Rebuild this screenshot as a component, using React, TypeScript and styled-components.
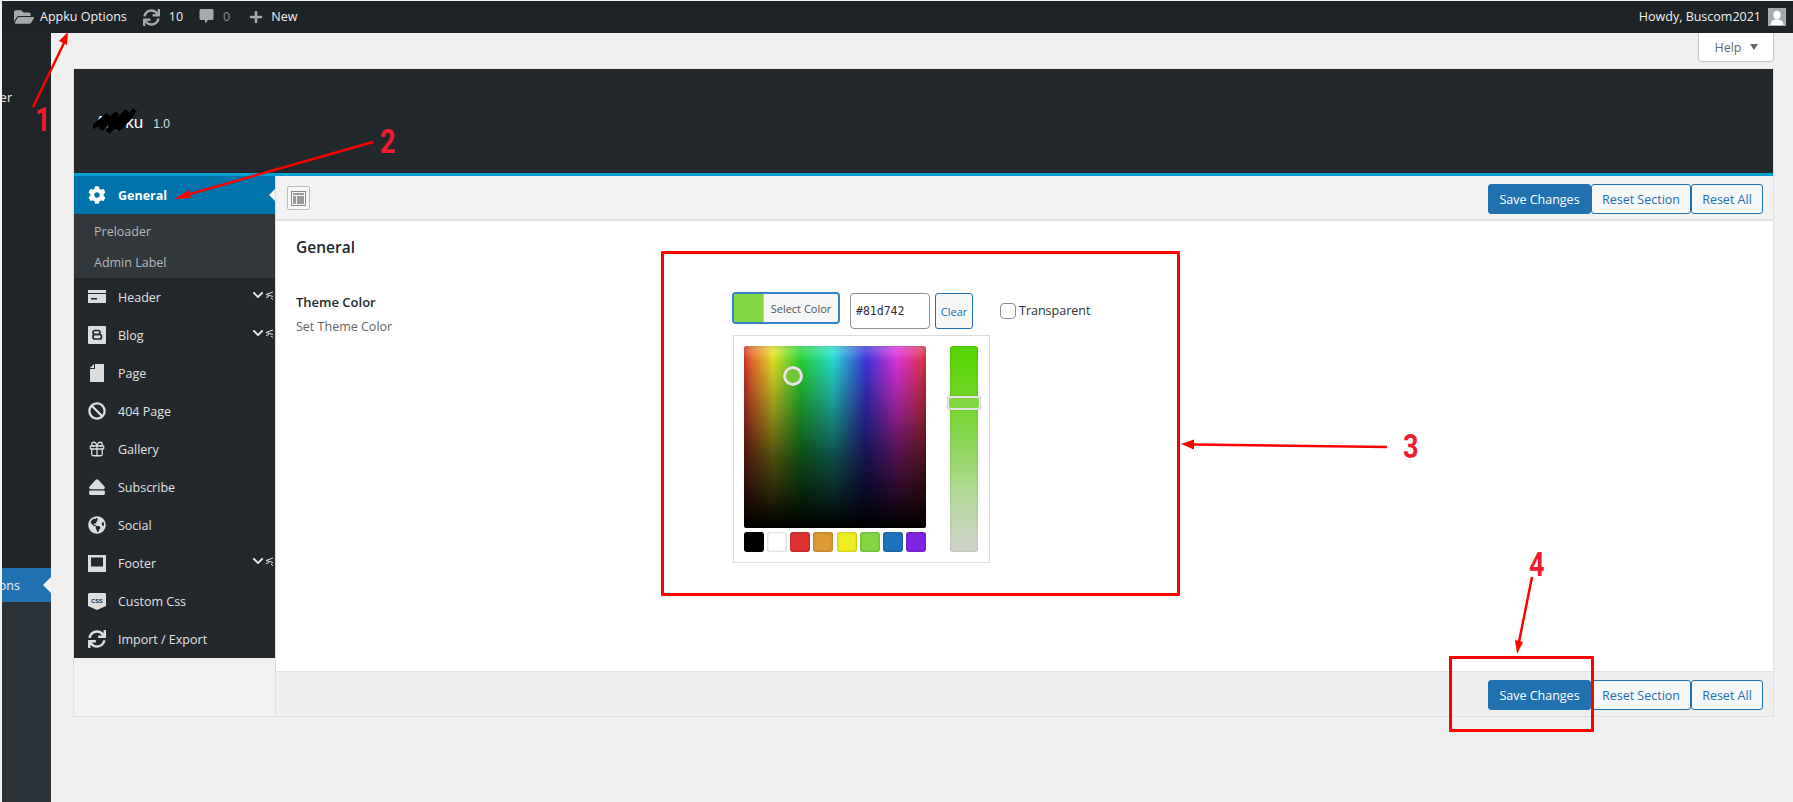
import React from "react";
import styled, { createGlobalStyle } from "styled-components";
import { FaCog, FaBan, FaEject, FaGlobeAmericas, FaSync, FaFolderOpen, FaPlus, FaChevronDown } from "react-icons/fa";
import { Gift } from "lucide-react";

const GlobalStyle = createGlobalStyle`
  html, body {
    margin: 0;
    padding: 0;
    background: #f0f0f1;
    font-family: "Open Sans", "Noto Sans", sans-serif;
    font-size: 12.5px;
    color: #3c434a;
  }
  * { box-sizing: border-box; }
`;

const Page = styled.div`
  position: relative;
  width: 1793px;
  height: 802px;
  padding: 1px 0 0 2px;
  background: #f4f4f4;
  overflow: hidden;
  display: flex;
  flex-direction: column;
`;

const AdminBar = styled.div`
  height: 32px;
  background: #1d2327;
  color: #f0f0f1;
  display: flex;
  align-items: center;
  padding: 0 7px 0 12px;
  flex-shrink: 0;
`;

const BarItem = styled.div<{ $gap?: number; $mr?: number }>`
  display: flex;
  align-items: center;
  gap: ${(p) => p.$gap ?? 7}px;
  margin-right: ${(p) => p.$mr ?? 16}px;
  line-height: 32px;
  color: #f0f0f1;
  svg { color: #a7aaad; display: block; }
`;

const MutedCount = styled.span`
  color: #8c8f94;
`;

const BarSpacer = styled.div`
  flex: 1;
`;

const Avatar = styled.div`
  width: 18px;
  height: 18px;
  background: #a7aaad;
  margin-left: 7px;
  svg { display: block; }
`;

const Layout = styled.div`
  flex: 1;
  display: flex;
  min-height: 0;
`;

const WpMenu = styled.div`
  width: 49px;
  flex-shrink: 0;
  background: #1e2427;
  display: flex;
  flex-direction: column;
  padding-top: 47px;
`;

const WpMenuItem = styled.div<{ $active?: boolean; $right: number; $height: number; $mt?: number }>`
  position: relative;
  height: ${(p) => p.$height}px;
  margin-top: ${(p) => p.$mt ?? 0}px;
  display: flex;
  align-items: center;
  justify-content: flex-end;
  padding-right: ${(p) => p.$right}px;
  white-space: nowrap;
  color: #f0f0f1;
  background: ${(p) => (p.$active ? "#2271b1" : "transparent")};
  ${(p) =>
    p.$active &&
    `&::after {
      content: "";
      position: absolute;
      right: 0;
      top: 9px;
      border: 8px solid transparent;
      border-right-color: #f0f0f1;
      border-left-width: 0;
    }`}
`;

const WpMenuRest = styled.div`
  flex: 1;
  background: #2c3338;
`;

const Main = styled.div`
  flex: 1;
  min-width: 0;
  display: flex;
  flex-direction: column;
  background: #f0f0f1;
`;

const HelpRow = styled.div`
  height: 29px;
  display: flex;
  justify-content: flex-end;
  padding-right: 19px;
`;

const HelpTab = styled.div`
  width: 76px;
  height: 29px;
  background: #fff;
  border: 1px solid #c3c4c7;
  border-top: none;
  border-radius: 0 0 4px 4px;
  color: #646970;
  display: flex;
  align-items: center;
  justify-content: center;
  gap: 8px;
`;

const HelpCaret = styled.span`
  width: 0;
  height: 0;
  border-left: 4px solid transparent;
  border-right: 4px solid transparent;
  border-top: 6px solid #646970;
`;

const Panel = styled.div`
  margin: 6px 19px 0 22px;
  height: 649px;
  display: flex;
  flex-direction: column;
  border: 1px solid #e0e0e0;
  border-top-color: #e5e5e5;
  background: #f1f1f1;
`;

const PanelHeader = styled.div`
  height: 107px;
  flex-shrink: 0;
  background: #23282d;
  border-bottom: 3px solid #00a0d2;
  display: flex;
  align-items: center;
  padding: 3px 0 0 21px;
  gap: 10px;
`;

const Brand = styled.div`
  position: relative;
  font-family: "Liberation Sans", Arial, sans-serif;
  font-size: 17px;
  color: #fff;
  line-height: 20px;
`;

const Scribble = styled.svg`
  position: absolute;
  left: -2px;
  top: -7px;
`;

const Version = styled.span`
  font-family: "Liberation Sans", Arial, sans-serif;
  font-size: 12px;
  color: #d8e2ea;
  padding-top: 2px;
`;

const PanelBody = styled.div`
  flex: 1;
  display: flex;
  min-height: 0;
`;

const Sidebar = styled.div`
  width: 202px;
  flex-shrink: 0;
  display: flex;
  flex-direction: column;
  background: #f1f1f1;
  border-right: 1px solid #dcdcdc;
`;

const NavItem = styled.div<{ $active?: boolean }>`
  position: relative;
  height: 38px;
  flex-shrink: 0;
  display: flex;
  align-items: center;
  gap: 12px;
  padding-left: 14px;
  background: ${(p) => (p.$active ? "#0073aa" : "#23282d")};
  color: ${(p) => (p.$active ? "#fff" : "#e2e2e2")};
  font-weight: ${(p) => (p.$active ? 700 : 400)};
  ${(p) =>
    p.$active &&
    `&::after {
      content: "";
      position: absolute;
      right: 0;
      top: 13px;
      border: 6px solid transparent;
      border-right-color: #f2f2f2;
      border-left-width: 0;
    }`}
`;

const NavIcon = styled.span`
  width: 18px;
  height: 18px;
  flex-shrink: 0;
  display: flex;
  align-items: center;
  justify-content: center;
  color: #dcdcdc;
  svg { display: block; }
`;

const ActiveIcon = styled(NavIcon)`
  color: #fff;
`;

const Expand = styled.span`
  position: absolute;
  right: 1px;
  top: 11px;
  display: flex;
  align-items: center;
  gap: 1px;
  color: #e8e8e8;
  svg { display: block; }
`;

const SubMenu = styled.div`
  height: 64px;
  flex-shrink: 0;
  padding-top: 2px;
  background: #32373c;
  display: flex;
  flex-direction: column;
`;

const SubItem = styled.div`
  height: 31px;
  padding-left: 20px;
  display: flex;
  align-items: center;
  color: #b4b9be;
`;

const SidebarFiller = styled.div`
  flex: 1;
  background: #f1f1f1;
`;

const Content = styled.div`
  flex: 1;
  min-width: 0;
  display: flex;
  flex-direction: column;
`;

const Toolbar = styled.div`
  height: 45px;
  flex-shrink: 0;
  background: #f2f2f2;
  border-bottom: 2px solid #e2e2e2;
  display: flex;
  align-items: center;
  justify-content: space-between;
  padding: 3px 10px 0 11px;
`;

const LayoutToggle = styled.div`
  width: 23px;
  height: 24px;
  margin-top: -2px;
  border: 1px solid #bdbdbd;
  border-radius: 2px;
  background: #f6f7f7;
  display: flex;
  align-items: center;
  justify-content: center;
  svg { display: block; }
`;

const ButtonGroup = styled.div`
  display: flex;
`;

const ActionButton = styled.div<{ $primary?: boolean; $width: number }>`
  width: ${(p) => p.$width}px;
  height: 30px;
  border: 1px solid #2271b1;
  border-radius: 3px;
  background: ${(p) => (p.$primary ? "#2271b1" : "#f6f7f7")};
  color: ${(p) => (p.$primary ? "#fff" : "#2271b1")};
  display: flex;
  align-items: center;
  justify-content: center;
  white-space: nowrap;
`;

const Section = styled.div`
  flex: 1;
  background: #fff;
  padding: 16px 20px;
`;

const SectionTitle = styled.h2`
  margin: 0 0 35px;
  font-size: 15.5px;
  line-height: 20px;
  font-weight: 600;
  color: #23282d;
`;

const OptionRow = styled.div`
  display: flex;
`;

const OptionLabel = styled.div`
  width: 436px;
  flex-shrink: 0;
  padding-top: 1px;
`;

const OptionName = styled.div`
  font-size: 13px;
  font-weight: 600;
  color: #23282d;
  line-height: 18px;
  margin-bottom: 7px;
`;

const OptionHint = styled.div`
  font-size: 12.5px;
  color: #666;
  line-height: 18px;
`;

const FieldRow = styled.div`
  display: flex;
  align-items: flex-start;
`;

const SelectColor = styled.div`
  width: 108px;
  height: 32px;
  border: 2px solid #3582c4;
  border-radius: 4px;
  background: #f6f7f7;
  display: flex;
  overflow: hidden;
`;

const ColorChip = styled.span`
  width: 30px;
  background: #81d742;
  border-right: 1px solid #c3c4c7;
`;

const SelectLabel = styled.span`
  flex: 1;
  text-align: center;
  font-size: 11px;
  line-height: 29px;
  color: #50575e;
`;

const HexInput = styled.div`
  width: 80px;
  height: 36px;
  margin: 1px 0 0 10px;
  border: 1px solid #8c8f94;
  border-radius: 4px;
  background: #fff;
  padding-left: 5px;
  font-family: "DejaVu Sans Mono", monospace;
  font-size: 11.5px;
  line-height: 34px;
  color: #2c3338;
`;

const ClearButton = styled.div`
  width: 38px;
  height: 36px;
  margin: 1px 0 0 5px;
  border: 1px solid #2271b1;
  border-radius: 3px;
  background: #f6f7f7;
  color: #2271b1;
  font-size: 11px;
  line-height: 36px;
  text-align: center;
`;

const Transparent = styled.label`
  display: flex;
  align-items: center;
  gap: 3px;
  margin: 10px 0 0 27px;
  color: #2c3338;
`;

const CheckBox = styled.span`
  width: 16px;
  height: 16px;
  border: 1px solid #8c8f94;
  border-radius: 4px;
  background: #fff;
`;

const PickerBox = styled.div`
  width: 257px;
  height: 228px;
  margin: 6px 0 0 1px;
  border: 1px solid #dcdcde;
  background: #fff;
  padding: 10px;
  display: flex;
  gap: 24px;
`;

const PickerLeft = styled.div`
  width: 182px;
  display: flex;
  flex-direction: column;
  gap: 4px;
`;

const Square = styled.div`
  position: relative;
  width: 182px;
  height: 182px;
  border-radius: 2px;
  background:
    linear-gradient(to bottom, rgba(255, 255, 255, 0.24), rgba(255, 255, 255, 0) 8%),
    linear-gradient(to bottom, rgba(0, 0, 0, 0) 0%, rgba(0, 0, 0, 0.24) 22%, rgba(0, 0, 0, 0.66) 60%, #000 100%),
    linear-gradient(
      to right,
      #f04030 0%,
      #f4ee28 16%,
      #28e038 31%,
      #28eae0 49%,
      #4036e8 67%,
      #ee34e8 84%,
      #f03848 100%
    );
  box-shadow: inset 0 0 6px rgba(0, 0, 0, 0.25);
`;

const Handle = styled.div`
  position: absolute;
  left: 39px;
  top: 20px;
  width: 20px;
  height: 20px;
  border: 3px solid #e6e6e6;
  border-radius: 50%;
  background: #74c836;
  box-shadow: 0 0 1px rgba(0, 0, 0, 0.4);
`;

const Swatches = styled.div`
  display: flex;
  justify-content: space-between;
`;

const Swatch = styled.span<{ $color: string }>`
  width: 20px;
  height: 20px;
  border-radius: 3px;
  background: ${(p) => p.$color};
  box-shadow: inset 0 0 3px rgba(0, 0, 0, 0.3);
`;

const Strip = styled.div`
  position: relative;
  width: 28px;
  height: 206px;
  border-radius: 3px;
  background: linear-gradient(to bottom, #52d400 0%, #76d62e 30%, #8fd860 50%, #b2d998 72%, #d0d3cc 100%);
  box-shadow: inset 0 0 3px rgba(0, 0, 0, 0.15);
`;

const StripThumb = styled.div`
  position: absolute;
  left: -3px;
  top: 50px;
  width: 34px;
  height: 14px;
  border: 2px solid #e4e4e4;
  border-radius: 4px;
  background: #81d742;
  box-shadow: 0 0 1px rgba(0, 0, 0, 0.6);
`;

const PanelFooter = styled.div`
  height: 45px;
  flex-shrink: 0;
  background: #eeeeee;
  border-top: 1px solid #e2e2e2;
  display: flex;
  align-items: center;
  justify-content: flex-end;
  padding: 2px 10px 0 0;
`;

const Annotations = styled.svg`
  position: absolute;
  left: 0;
  top: 0;
  pointer-events: none;
`;

const Callout = styled.div<{ $x: number; $y: number }>`
  position: absolute;
  left: ${(p) => p.$x}px;
  top: ${(p) => p.$y}px;
  font-family: Roboto, "Liberation Sans", sans-serif;
  font-weight: 700;
  font-size: 33px;
  line-height: 33px;
  color: #ee1c2e;
  transform: scaleX(0.82);
  transform-origin: left top;
`;

const RedBox = styled.div<{ $x: number; $y: number; $w: number; $h: number }>`
  position: absolute;
  left: ${(p) => p.$x}px;
  top: ${(p) => p.$y}px;
  width: ${(p) => p.$w}px;
  height: ${(p) => p.$h}px;
  border: 3px solid #f00;
  border-radius: 1px;
  pointer-events: none;
`;

const CommentIcon = () => (
  <svg width="15" height="16" viewBox="0 0 15 16" fill="currentColor">
    <path d="M2 0h11a1.500 1.500 0 0 1 1.500 1.500v8A1.500 1.500 0 0 1 13 11H9l-3 3.500V11H2A1.500 1.500 0 0 1 .5 9.500v-8A1.500 1.500 0 0 1 2 0z" />
  </svg>
);

const PersonIcon = () => (
  <svg width="18" height="18" viewBox="0 0 18 18" fill="#fff">
    <ellipse cx="9" cy="7" rx="3.600" ry="4.200" />
    <path d="M2.500 17c.3-3.600 2.600-5 4.500-5.500h4c1.900.5 4.200 1.900 4.500 5.500z" />
  </svg>
);

const CardIcon = () => (
  <svg width="18" height="14" viewBox="0 0 18 14" fill="currentColor">
    <path d="M0 0h18v3H0zM0 4h18v9H0zM3 8v1.500h6V8z" fillRule="evenodd" />
  </svg>
);

const BloggerIcon = () => (
  <svg width="18" height="18" viewBox="0 0 18 18">
    <rect width="18" height="18" rx="1" fill="currentColor" />
    <rect x="5" y="4.500" width="7" height="4" rx="2" fill="none" stroke="#23282d" strokeWidth="1.700" />
    <rect x="5" y="8.500" width="8.500" height="4.500" rx="2" fill="none" stroke="#23282d" strokeWidth="1.700" />
  </svg>
);

const PageIcon = () => (
  <svg width="14" height="18" viewBox="0 0 14 18" fill="currentColor">
    <path d="M0 4l4-4v4zM5 0h9v18H0V5h5z" />
  </svg>
);

const ScreenIcon = () => (
  <svg width="18" height="17" viewBox="0 0 18 17">
    <path d="M0 0h18v17H0zM3 2.500v9h12v-9z" fill="currentColor" fillRule="evenodd" />
  </svg>
);

const CssIcon = () => (
  <svg width="18" height="17" viewBox="0 0 18 17">
    <path d="M1 0h16l1 1v12l-9 4-9-4V1z" fill="currentColor" />
    <text x="9" y="10" textAnchor="middle" fontSize="5.500" fontWeight="700" fontFamily="Liberation Sans, sans-serif" fill="#23282d">
      CSS
    </text>
  </svg>
);

const ExpandMark = () => (
  <Expand>
    <FaChevronDown size={12} />
    <svg width="9" height="9" viewBox="0 0 9 9" fill="none" stroke="currentColor" strokeWidth="1">
      <path d="M8 1L1 3.500l7 2M1 6.500l3-1M6 7l2 1.500" />
    </svg>
  </Expand>
);

const navItems: { label: string; icon: React.ReactNode; expand?: boolean }[] = [
  { label: "Header", icon: <CardIcon />, expand: true },
  { label: "Blog", icon: <BloggerIcon />, expand: true },
  { label: "Page", icon: <PageIcon /> },
  { label: "404 Page", icon: <FaBan size={18} /> },
  { label: "Gallery", icon: <Gift size={18} strokeWidth={1.7} /> },
  { label: "Subscribe", icon: <FaEject size={18} /> },
  { label: "Social", icon: <FaGlobeAmericas size={18} /> },
  { label: "Footer", icon: <ScreenIcon />, expand: true },
  { label: "Custom Css", icon: <CssIcon /> },
  { label: "Import / Export", icon: <FaSync size={18} /> },
];

const swatches = ["#000000", "#ffffff", "#dd3333", "#dd9933", "#eeee22", "#81d742", "#1e73be", "#8224e3"];

const Buttons = () => (
  <ButtonGroup>
    <ActionButton $primary $width={103}>Save Changes</ActionButton>
    <ActionButton $width={100}>Reset Section</ActionButton>
    <ActionButton $width={72}>Reset All</ActionButton>
  </ButtonGroup>
);

const App: React.FC = () => {
  return (
    <Page>
      <GlobalStyle />
      <AdminBar>
        <BarItem $gap={6} $mr={16}>
          <FaFolderOpen size={20} />
          Appku Options
        </BarItem>
        <BarItem $gap={9} $mr={16}>
          <FaSync size={17} />
          10
        </BarItem>
        <BarItem $gap={9} $mr={19}>
          <CommentIcon />
          <MutedCount>0</MutedCount>
        </BarItem>
        <BarItem $gap={8}>
          <FaPlus size={14} />
          New
        </BarItem>
        <BarSpacer />
        <BarItem $mr={0}>Howdy, Buscom2021</BarItem>
        <Avatar>
          <PersonIcon />
        </Avatar>
      </AdminBar>
      <Layout>
        <WpMenu>
          <WpMenuItem $right={39} $height={34}>
            <span>er</span>
          </WpMenuItem>
          <WpMenuItem $active $right={31} $height={34} $mt={454}>
            <span>ons</span>
          </WpMenuItem>
          <WpMenuRest />
        </WpMenu>
        <Main>
          <HelpRow>
            <HelpTab>
              Help
              <HelpCaret />
            </HelpTab>
          </HelpRow>
          <Panel>
            <PanelHeader>
              <Brand>
                Appku
                <Scribble width="48" height="32" viewBox="0 0 48 32" fill="none" stroke="#000" strokeWidth="5" strokeLinecap="round">
                  <path d="M2 20L15 9l-7 14L24 7 15 26 34 5 24 24 42 4 29 20" />
                </Scribble>
              </Brand>
              <Version>1.0</Version>
            </PanelHeader>
            <PanelBody>
              <Sidebar>
                <NavItem $active>
                  <ActiveIcon>
                    <FaCog size={18} />
                  </ActiveIcon>
                  General
                </NavItem>
                <SubMenu>
                  <SubItem>Preloader</SubItem>
                  <SubItem>Admin Label</SubItem>
                </SubMenu>
                {navItems.map((item) => (
                  <NavItem key={item.label}>
                    <NavIcon>{item.icon}</NavIcon>
                    {item.label}
                    {item.expand && <ExpandMark />}
                  </NavItem>
                ))}
                <SidebarFiller />
              </Sidebar>
              <Content>
                <Toolbar>
                  <LayoutToggle>
                    <svg width="15" height="15" viewBox="0 0 15 15">
                      <rect x="0.5" y="0.5" width="14" height="14" fill="none" stroke="#8a8a8a" />
                      <rect x="2" y="2" width="11" height="2" fill="#9a9a9a" />
                      <rect x="2" y="5" width="3" height="8" fill="#9a9a9a" />
                      <rect x="6" y="5" width="7" height="8" fill="#9a9a9a" />
                    </svg>
                  </LayoutToggle>
                  <Buttons />
                </Toolbar>
                <Section>
                  <SectionTitle>General</SectionTitle>
                  <OptionRow>
                    <OptionLabel>
                      <OptionName>Theme Color</OptionName>
                      <OptionHint>Set Theme Color</OptionHint>
                    </OptionLabel>
                    <div>
                      <FieldRow>
                        <SelectColor>
                          <ColorChip />
                          <SelectLabel>Select Color</SelectLabel>
                        </SelectColor>
                        <HexInput>#81d742</HexInput>
                        <ClearButton>Clear</ClearButton>
                        <Transparent>
                          <CheckBox />
                          Transparent
                        </Transparent>
                      </FieldRow>
                      <PickerBox>
                        <PickerLeft>
                          <Square>
                            <Handle />
                          </Square>
                          <Swatches>
                            {swatches.map((color) => (
                              <Swatch key={color} $color={color} />
                            ))}
                          </Swatches>
                        </PickerLeft>
                        <Strip>
                          <StripThumb />
                        </Strip>
                      </PickerBox>
                    </div>
                  </OptionRow>
                </Section>
                <PanelFooter>
                  <Buttons />
                </PanelFooter>
              </Content>
            </PanelBody>
          </Panel>
        </Main>
      </Layout>

      <RedBox $x={661} $y={251} $w={519} $h={345} />
      <RedBox $x={1449} $y={656} $w={145} $h={76} />
      <Annotations width="1793" height="802" viewBox="0 0 1793 802" fill="#f00" stroke="none">
        <path d="M33 107L64 43" stroke="#f00" strokeWidth="2.5" />
        <path d="M68 32L59 41L67 45Z" />
        <path d="M373 142L190 194" stroke="#f00" strokeWidth="2.5" />
        <path d="M174 199L189 190L191 198Z" />
        <path d="M1387 447L1193 444.5" stroke="#f00" strokeWidth="2.5" />
        <path d="M1181 444L1194 439.5V449.5Z" />
        <path d="M1532 577L1519 642" stroke="#f00" strokeWidth="2.5" />
        <path d="M1517 654L1515 640L1523 642Z" />
      </Annotations>
      <Callout $x={35} $y={103}>1</Callout>
      <Callout $x={380} $y={125}>2</Callout>
      <Callout $x={1403} $y={430}>3</Callout>
      <Callout $x={1529} $y={548}>4</Callout>
    </Page>
  );
};

export default App;
